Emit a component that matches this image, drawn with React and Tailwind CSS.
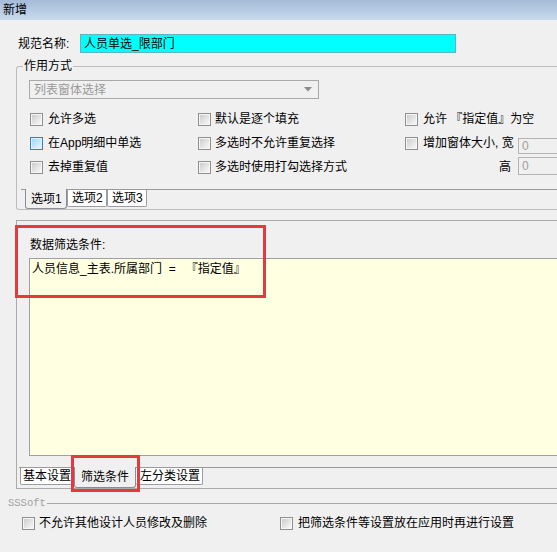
const Box = ({ hot }) => (
  <span
    className={
      hot
        ? "block w-[13px] h-[13px] shrink-0 border border-[#3c7fb1] p-px bg-[#dff1fc]"
        : "block w-[13px] h-[13px] shrink-0 border border-[#8e8f8f] p-px bg-[#f6f6f6]"
    }
  >
    <span
      className={
        hot
          ? "block w-full h-full bg-linear-to-br from-[#a6d6f7] to-[#e6f5fe]"
          : "block w-full h-full bg-linear-to-br from-[#cdcdcd] to-[#f8f8f8]"
      }
    ></span>
  </span>
);

const Check = ({ label, hot, gap = "gap-[5px]" }) => (
  <div className={`flex items-center ${gap} whitespace-pre`}>
    <Box hot={hot} />
    <span>{label}</span>
  </div>
);

export default function App() {
  return (
    <div className="relative w-[557px] h-[552px] overflow-hidden bg-[#f0f0f0] text-[12px] leading-[14px] text-black font-['Liberation_Sans','Noto_Sans_CJK_SC',sans-serif]">
      {/* title bar */}
      <div className="h-[20px] flex items-center pl-[3px] bg-linear-to-b from-[#a5bbd7] to-[#c7daee]">
        新增
      </div>

      {/* name row */}
      <div className="mt-[14px] flex items-center h-[19px]">
        <span className="w-[80px] pl-[18px]">规范名称:</span>
        <div className="w-[376px] h-[19px] flex items-center pl-[3px] bg-[#00ffff] border border-[#62b3bf]">
          人员单选_限部门
        </div>
      </div>

      {/* 作用方式 group */}
      <div className="relative mt-[13px] ml-[16px] w-[600px] h-[144px] border-t border-l border-b border-[#bdbdbd] rounded-tl-[3px] rounded-bl-[3px]">
        <span className="absolute -top-[8px] left-[6px] px-px bg-[#f0f0f0]">作用方式</span>

        <div className="ml-[12px] mt-[13px] w-[290px] h-[19px] flex items-center justify-between pl-[4px] pr-[6px] border border-[#a9a9a9] text-[#9a9a9a]">
          <span>列表窗体选择</span>
          <svg width="8" height="5" viewBox="0 0 8 5">
            <path d="M0 0h8L4 4.5z" fill="#8a8a8a" />
          </svg>
        </div>

        <div className="mt-[8px] ml-[13px] grid grid-cols-[168px_207px_1fr] grid-rows-[24px_24px_24px] items-center">
          <Check label="允许多选" />
          <Check label="默认是逐个填充" gap="gap-[4px]" />
          <Check label="允许 『指定值』为空" />

          <Check label="在App明细中单选" hot />
          <Check label="多选时不允许重复选择" gap="gap-[4px]" />
          <div className="grid grid-cols-[113px_1fr] h-full">
            <div className="flex items-center">
              <Check label="增加窗体大小, 宽" />
            </div>
            <div className="self-start mt-[7px] h-[16px] flex items-center pl-[3px] border border-[#b4b4b4] text-[#a0a0a0]">
              0
            </div>
          </div>

          <Check label="去掉重复值" />
          <Check label="多选时使用打勾选择方式" gap="gap-[4px]" />
          <div className="grid grid-cols-[113px_1fr] h-full">
            <div className="flex items-center justify-end pr-[7px]">高</div>
            <div className="self-start mt-[2px] h-[18px] flex items-center pl-[3px] border border-[#b4b4b4] text-[#a0a0a0]">
              0
            </div>
          </div>
        </div>

        {/* tabs at bottom */}
        <div className="mt-[10px] ml-[4px] border-t border-[#9a9a9a]"></div>
        <div className="-mt-px ml-[8px] flex items-start">
          <div className="w-[42px] h-[20px] pl-[5px] flex items-center bg-[#f0f0f0] border-x border-b border-[#8a8d95] rounded-b-[3px]">
            选项1
          </div>
          <div className="mt-px w-[40px] h-[17px] pl-[4px] flex items-center bg-white border-x border-b border-[#9a9da5] rounded-b-[2px]">
            选项2
          </div>
          <div className="mt-px w-[40px] h-[17px] pl-[4px] flex items-center bg-white border-x border-b border-[#9a9da5] rounded-b-[2px]">
            选项3
          </div>
        </div>
      </div>

      {/* filter panel */}
      <div className="mt-[10px] ml-[16px] w-[600px] h-[269px] border-t border-l border-b border-[#aaaaaa]">
        <div className="ml-[13px] mt-[17px]">数据筛选条件:</div>
        <div className="ml-[12px] mt-[6px] h-[198px] bg-[#ffffe1] border-t border-l border-b border-[#a0a0a0] pl-[2px] pt-[3px] whitespace-pre">
          人员信息_主表.所属部门  =   『指定值』
        </div>
        <div className="mt-[11px] ml-[2px] border-t border-[#9a9a9a]"></div>
        <div className="-mt-px ml-[3px] flex items-start">
          <div className="mt-px w-[52px] h-[17px] pl-[2px] flex items-center bg-white border-x border-b border-[#9a9da5] rounded-b-[2px]">
            基本设置
          </div>
          <div className="ml-[2px] w-[62px] h-[21px] pl-[6px] flex items-center bg-[#f0f0f0] border-x border-b border-[#8a8d95] rounded-b-[3px]">
            筛选条件
          </div>
          <div className="mt-px w-[67px] h-[17px] pl-[4px] flex items-center bg-white border-r border-b border-[#9a9da5] rounded-b-[2px]">
            左分类设置
          </div>
        </div>
      </div>

      {/* SSSoft */}
      <div className="mt-[7px] h-[14px] flex items-center">
        <span className="ml-[8px] text-[#a0a0a0] text-[10.5px] font-['Liberation_Mono',monospace]">SSSoft</span>
        <span className="flex-1 ml-px border-t border-[#a8a8a8]"></span>
      </div>
      <div className="mt-px h-[24px] flex items-center">
        <div className="ml-[22px] w-[258px]">
          <Check label="不允许其他设计人员修改及删除" gap="gap-[4px]" />
        </div>
        <Check label="把筛选条件等设置放在应用时再进行设置" />
      </div>

      {/* red highlight marks */}
      <div className="absolute left-[15px] top-[225px] w-[251px] h-[73px] border-[3px] border-[#e6393d]"></div>
      <div className="absolute left-[71px] top-[455px] w-[69px] h-[37px] border-[3px] border-[#e6393d]"></div>
    </div>
  );
}
